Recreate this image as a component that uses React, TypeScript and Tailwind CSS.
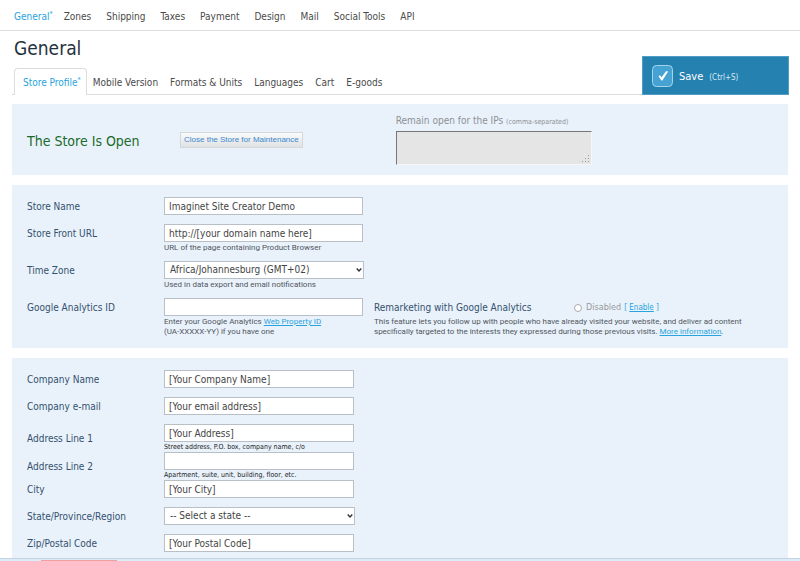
import React from 'react';

const navItems = ["Zones", "Shipping", "Taxes", "Payment", "Design", "Mail", "Social Tools", "API"];
const tabs = ["Mobile Version", "Formats & Units", "Languages", "Cart", "E-goods"];

const inputClass = "block h-[18px] border border-[#b9bfc6] bg-white px-1 text-[10px] leading-4 text-[#444] outline-none";
const hintClass = "pt-px font-[Roboto] text-[8px] leading-[10px]";

type FieldProps = {
  id: string;
  label: string;
  center?: boolean;
  children: React.ReactNode;
};

const Field: React.FC<FieldProps> = ({ id, label, center, children }) => (
  <div className={center ? "flex items-center" : "flex items-start"}>
    <label htmlFor={id} className="-mb-px w-[137px] shrink-0 pt-px text-[10px] leading-[18px] text-[#34506e]">{label}</label>
    <div className="min-w-0">{children}</div>
  </div>
);

const Select: React.FC<{ id: string; option: string; width: string }> = ({ id, option, width }) => (
  <div className={`relative ${width}`}>
    <select id={id} className="block h-[18px] w-full appearance-none border border-[#b9bfc6] bg-white px-[5px] text-[10px] leading-4 text-[#444] outline-none">
      <option>{option}</option>
    </select>
    <svg viewBox="0 0 6 4" className="pointer-events-none absolute top-[7px] right-0.5 h-1 w-1.5" fill="none" stroke="#333" strokeWidth="1.4">
      <path d="M0.7 0.6 L3 3 L5.3 0.6" />
    </svg>
  </div>
);

const Header: React.FC = () => (
  <nav className="flex h-[31px] items-center border-b border-[#dedede] px-3.5 pt-0.5 text-[10px] whitespace-nowrap text-[#4a4a4a]">
    <a href="#general" className="mr-[11px] text-[#27a3dd]">General<sup className="-top-1 text-[7px] leading-none">*</sup></a>
    <div className="flex gap-[15px]">
      {navItems.map((item) => (
        <a key={item} href="#">{item}</a>
      ))}
    </div>
  </nav>
);

const TitleBar: React.FC = () => (
  <div className="flex items-end pr-[11px] pl-3">
    <div className="min-w-0 flex-1">
      <h1 className="h-[37px] pt-[5px] pl-0.5 text-[19px] leading-6 text-[#25323d]">General</h1>
      <div className="flex h-[27px] items-stretch border-b border-[#dcdcdc] pl-0.5 text-[10px] leading-[27px] whitespace-nowrap text-[#4a4a4a]">
        <a href="#profile" className="-mb-px rounded-t-sm border border-b-0 border-[#dcdcdc] bg-white pr-[5px] pl-2 text-[#27a3dd]">
          Store Profile<sup className="-top-1 text-[7px] leading-none">*</sup>
        </a>
        <div className="flex gap-3 pt-px pl-1.5">
          {tabs.map((tab) => (
            <a key={tab} href="#">{tab}</a>
          ))}
        </div>
      </div>
    </div>
    <button type="button" className="flex h-[39px] w-[147px] items-center border border-[#4f9cc4] bg-[#2581b0] pl-[9px] text-white">
      <svg viewBox="0 0 21 22" className="h-[22px] w-[21px]">
        <rect x="0.5" y="0.5" width="20" height="21" rx="4" fill="#45a2d2" stroke="#a5d3ea" />
        <path d="M6.5 11.2 L8 10.2 L9.6 12.2 L14 6.2 L15.8 6.2 L15.8 7 L10.4 15.4 L9.4 15.4 Z" fill="#fff" />
      </svg>
      <span className="pt-1 pl-1.5 text-[11px]">Save</span>
      <span className="pt-1 pl-1.5 text-[8px] text-[#d8ecf6]">(Ctrl+S)</span>
    </button>
  </div>
);

const StatusPanel: React.FC = () => (
  <section className="mx-3 mt-[9px] flex h-[71px] items-start bg-[#e9f2fb] pl-[15px]">
    <h2 className="w-[153px] pt-[27px] text-[14px] leading-5 text-[#1b6a2a]">The Store Is Open</h2>
    <button type="button" className="mt-7 h-4 border border-[#d4d8dc] bg-linear-to-b from-[#fbfbfb] to-[#dfe1e3] px-[3px] font-['Liberation_Sans',sans-serif] text-[8px] leading-3 whitespace-nowrap text-[#3a87cf]">
      Close the Store for Maintenance
    </button>
    <div className="ml-[93px] pt-2.5">
      <label htmlFor="ips" className="block h-[17px] text-[10px] leading-[14px] text-[#8c9094]">
        Remain open for the IPs <span className="text-[7px]">(comma-separated)</span>
      </label>
      <div className="relative w-[196px]">
        <textarea id="ips" disabled className="block h-[34px] w-full resize-none border border-t-[#777] border-r-[#f6f6f6] border-b-[#f6f6f6] border-l-[#777] bg-[#e5e5e5]" />
        <svg viewBox="0 0 8 8" className="absolute right-0.5 bottom-0.5 size-2" fill="#999">
          <path d="M6 0h1v1H6zM3 3h1v1H3zM6 3h1v1H6zM0 6h1v1H0zM3 6h1v1H3zM6 6h1v1H6z" />
        </svg>
      </div>
    </div>
  </section>
);

const StorePanel: React.FC = () => (
  <section className="mx-3 mt-2.5 flex h-[163px] flex-col gap-2 bg-[#e9f2fb] pt-3 pl-[15px] text-[#50565e]">
    <div className="pb-px">
      <Field id="name" label="Store Name">
        <input id="name" defaultValue="Imaginet Site Creator Demo" className={`${inputClass} w-[199px]`} />
      </Field>
    </div>
    <Field id="url" label="Store Front URL">
      <input id="url" defaultValue="http://[your domain name here]" className={`${inputClass} w-[199px]`} />
      <p className={hintClass}>URL of the page containing Product Browser</p>
    </Field>
    <Field id="zone" label="Time Zone">
      <Select id="zone" option="Africa/Johannesburg (GMT+02)" width="w-[200px]" />
      <p className={hintClass}>Used in data export and email notifications</p>
    </Field>
    <div className="flex">
      <Field id="ga" label="Google Analytics ID">
        <input id="ga" className={`${inputClass} w-[199px]`} />
        <p className={hintClass}>
          Enter your Google Analytics <a href="#property" className="text-[#27a3dd] underline">Web Property ID</a>
          <br />
          (UA-XXXXX-YY) if you have one
        </p>
      </Field>
      <div className="ml-[11px]">
        <div className="flex h-[18px] items-center pt-px">
          <span className="w-[200px] text-[10px] text-[#34506e]">Remarketing with Google Analytics</span>
          <input id="remarketing" type="radio" className="size-2 appearance-none rounded-full border border-[#aaa] bg-white" />
          <label htmlFor="remarketing" className="pl-1 text-[9px] text-[#999]">Disabled</label>
          <span className="pl-[3px] text-[8px] text-[#27a3dd]">[ <a href="#enable" className="underline">Enable</a> ]</span>
        </div>
        <p className={`${hintClass} whitespace-nowrap`}>
          This feature lets you follow up with people who have already visited your website, and deliver ad content
          <br />
          specifically targeted to the interests they expressed during those previous visits. <a href="#more" className="text-[#27a3dd] underline">More information</a>.
        </p>
      </div>
    </div>
  </section>
);

const CompanyPanel: React.FC = () => (
  <section className="mx-3 mt-2.5 flex h-[200px] flex-col gap-[9px] bg-[#e9f2fb] pt-3 pl-[15px] text-[7px] leading-[10px] text-[#222]">
    <Field id="company" label="Company Name">
      <input id="company" defaultValue="[Your Company Name]" className={`${inputClass} w-[190px]`} />
    </Field>
    <Field id="email" label="Company e-mail">
      <input id="email" defaultValue="[Your email address]" className={`${inputClass} w-[190px]`} />
    </Field>
    <div>
      <Field id="address1" label="Address Line 1" center>
        <input id="address1" defaultValue="[Your Address]" className={`${inputClass} w-[190px]`} />
        <p>Street address, P.O. box, company name, c/o</p>
      </Field>
      <Field id="address2" label="Address Line 2" center>
        <input id="address2" className={`${inputClass} w-[190px]`} />
        <p>Apartment, suite, unit, building, floor, etc.</p>
      </Field>
      <Field id="city" label="City">
        <input id="city" defaultValue="[Your City]" className={`${inputClass} w-[190px]`} />
      </Field>
    </div>
    <Field id="state" label="State/Province/Region">
      <Select id="state" option="-- Select a state --" width="w-[191px]" />
    </Field>
    <Field id="zip" label="Zip/Postal Code">
      <input id="zip" defaultValue="[Your Postal Code]" className={`${inputClass} w-[190px]`} />
    </Field>
  </section>
);

const App: React.FC = () => {
  return (
    <div className="bg-white font-['DejaVu_Sans_Condensed','DejaVu_Sans',sans-serif]">
      <Header />
      <TitleBar />
      <StatusPanel />
      <StorePanel />
      <CompanyPanel />
      <footer className="h-[3px] border-t border-[#c3d3e3] bg-[#dcebf8] pt-px pl-[41px]">
        <div className="h-px w-[76px] bg-[#f0a0a0]" />
      </footer>
    </div>
  );
};

export default App;
